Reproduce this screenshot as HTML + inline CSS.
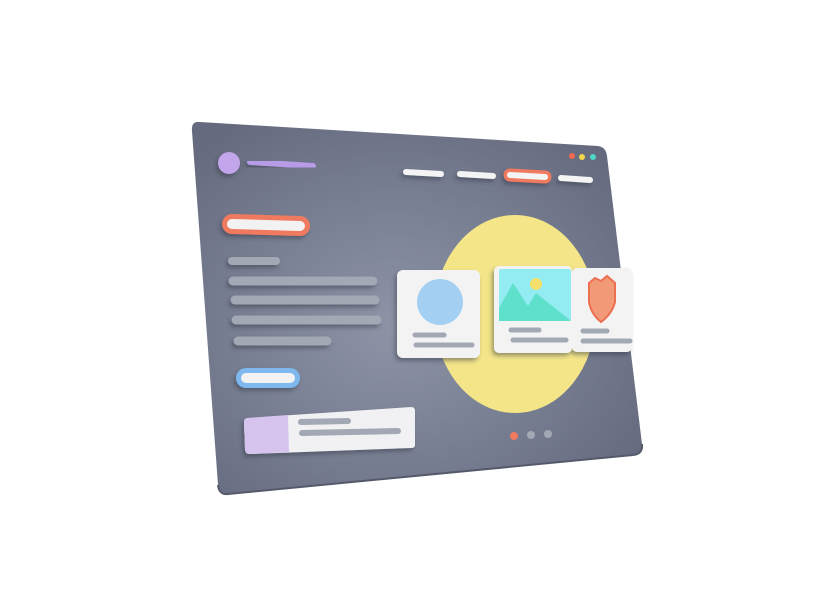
<!DOCTYPE html>
<html><head><meta charset="utf-8"><style>html,body{margin:0;padding:0;background:#fff;width:833px;height:609px;overflow:hidden}svg{display:block}</style></head>
<body>
<svg width="833" height="609" viewBox="0 0 833 609" xmlns="http://www.w3.org/2000/svg">
<defs>
<radialGradient id="bg" cx="0.45" cy="0.55" r="0.65">
<stop offset="0" stop-color="#8e94a6"/><stop offset="0.6" stop-color="#767c90"/><stop offset="1" stop-color="#656a7e"/>
</radialGradient>
<filter id="sh" x="-20%" y="-20%" width="140%" height="150%"><feDropShadow dx="-2" dy="3" stdDeviation="2" flood-color="#2e3142" flood-opacity="0.45"/></filter>
</defs>
<path d="M200,122 L598,146 Q606,147 607,156 L642,444 Q643,454 633,455 L228,494 Q219,495 218,485 L192,131 Q191,121 200,122 Z" fill="url(#bg)"/>
<path d="M218,485 Q219,495 228,494 L633,455 Q643,454 642,444" fill="none" stroke="#555a6b" stroke-width="2"/>
<!-- header -->
<circle cx="229" cy="163" r="11" fill="#c3a5ec" filter="url(#sh)"/>
<path d="M250,162 L313,166" stroke="#b79be6" stroke-width="6" stroke-linecap="round" filter="url(#sh)"/>
<circle cx="572" cy="156" r="3" fill="#ef6a4f"/><circle cx="582" cy="157" r="3" fill="#f2d84a"/><circle cx="593" cy="157" r="3" fill="#4fd6c4"/>
<g filter="url(#sh)" stroke-linecap="round">
<path d="M406,172 L441,174" stroke="#f4f4f4" stroke-width="6"/>
<path d="M460,174 L493,176" stroke="#f4f4f4" stroke-width="6"/>
<path d="M510,175 L545,177" stroke="#ef7a5e" stroke-width="13"/>
<path d="M510,175 L545,177" stroke="#f4f4f4" stroke-width="6"/>
<path d="M561,178 L590,180" stroke="#f4f4f4" stroke-width="6"/>
<!-- red button -->
<path d="M232,224 L300,226" stroke="#ef7a5e" stroke-width="20"/>
<path d="M232,224 L300,226" stroke="#f2f2f2" stroke-width="10"/>
<!-- lines -->
<path d="M232,261 L276,261" stroke="#a3a8b5" stroke-width="8"/>
<path d="M233,281 L373,281" stroke="#a3a8b5" stroke-width="9"/>
<path d="M235,300 L375,300" stroke="#a3a8b5" stroke-width="9"/>
<path d="M236,320 L377,320" stroke="#a3a8b5" stroke-width="9"/>
<path d="M238,341 L327,341" stroke="#a3a8b5" stroke-width="9"/>
<!-- blue button -->
<path d="M246,378 L290,378" stroke="#7db8ef" stroke-width="20"/>
<path d="M246,378 L290,378" stroke="#f2f2f2" stroke-width="10"/>
</g>
<!-- bottom card -->
<g filter="url(#sh)">
<path d="M248,418 L411,407 Q415,407 415,411 L415,445 Q415,448 411,448 L250,454 Q245,454 245,449 L244,422 Q244,418 248,418Z" fill="#f1f1f3"/>
<path d="M248,418 L288,415 L289,452 L250,454 Q245,454 245,449 L244,422 Q244,418 248,418Z" fill="#d6c4ee"/>
</g>
<path d="M301,422 L348,421" stroke="#a3a8b5" stroke-width="6" stroke-linecap="round"/>
<path d="M302,433 L398,431" stroke="#a3a8b5" stroke-width="6" stroke-linecap="round"/>
<!-- yellow circle -->
<ellipse cx="515" cy="314" rx="81" ry="99" fill="#f4e588"/>
<!-- cards -->
<g filter="url(#sh)">
<rect x="397" y="270" width="83" height="88" rx="6" fill="#f3f3f4"/>
<rect x="572" y="268" width="60" height="84" rx="5" fill="#f3f3f4"/>
<rect x="494" y="266" width="78" height="87" rx="5" fill="#f3f3f4"/>
</g>
<circle cx="440" cy="302" r="23" fill="#a3d0f2"/>
<path d="M415,335 L444,335" stroke="#a3a8b5" stroke-width="5" stroke-linecap="round"/>
<path d="M416,345 L472,345" stroke="#a3a8b5" stroke-width="5" stroke-linecap="round"/>
<rect x="499" y="269" width="72" height="52" rx="2" fill="#92ecf1"/>
<path d="M499,321 L499,308 L513,283 L528,306 L536,293 L571,321 Z" fill="#5fe0cc"/>
<circle cx="536" cy="284" r="6" fill="#f4e06a"/>
<path d="M511,330 L539,330" stroke="#a3a8b5" stroke-width="5" stroke-linecap="round"/>
<path d="M513,340 L566,340" stroke="#a3a8b5" stroke-width="5" stroke-linecap="round"/>
<path d="M589,283 L595,278 L601,281 L607,276 L615,283 L615,302 Q612,314 601,322 Q591,314 589,302 Z" fill="#f29a78" stroke="#ec6f50" stroke-width="2"/>
<path d="M583,331 L607,331" stroke="#a3a8b5" stroke-width="5" stroke-linecap="round"/>
<path d="M583,341 L630,341" stroke="#a3a8b5" stroke-width="5" stroke-linecap="round"/>
<!-- dots -->
<circle cx="514" cy="436" r="4" fill="#ef7a5e"/>
<circle cx="531" cy="435" r="4" fill="#a3a8b5"/>
<circle cx="548" cy="434" r="4" fill="#a3a8b5"/>
</svg>
</body></html>
